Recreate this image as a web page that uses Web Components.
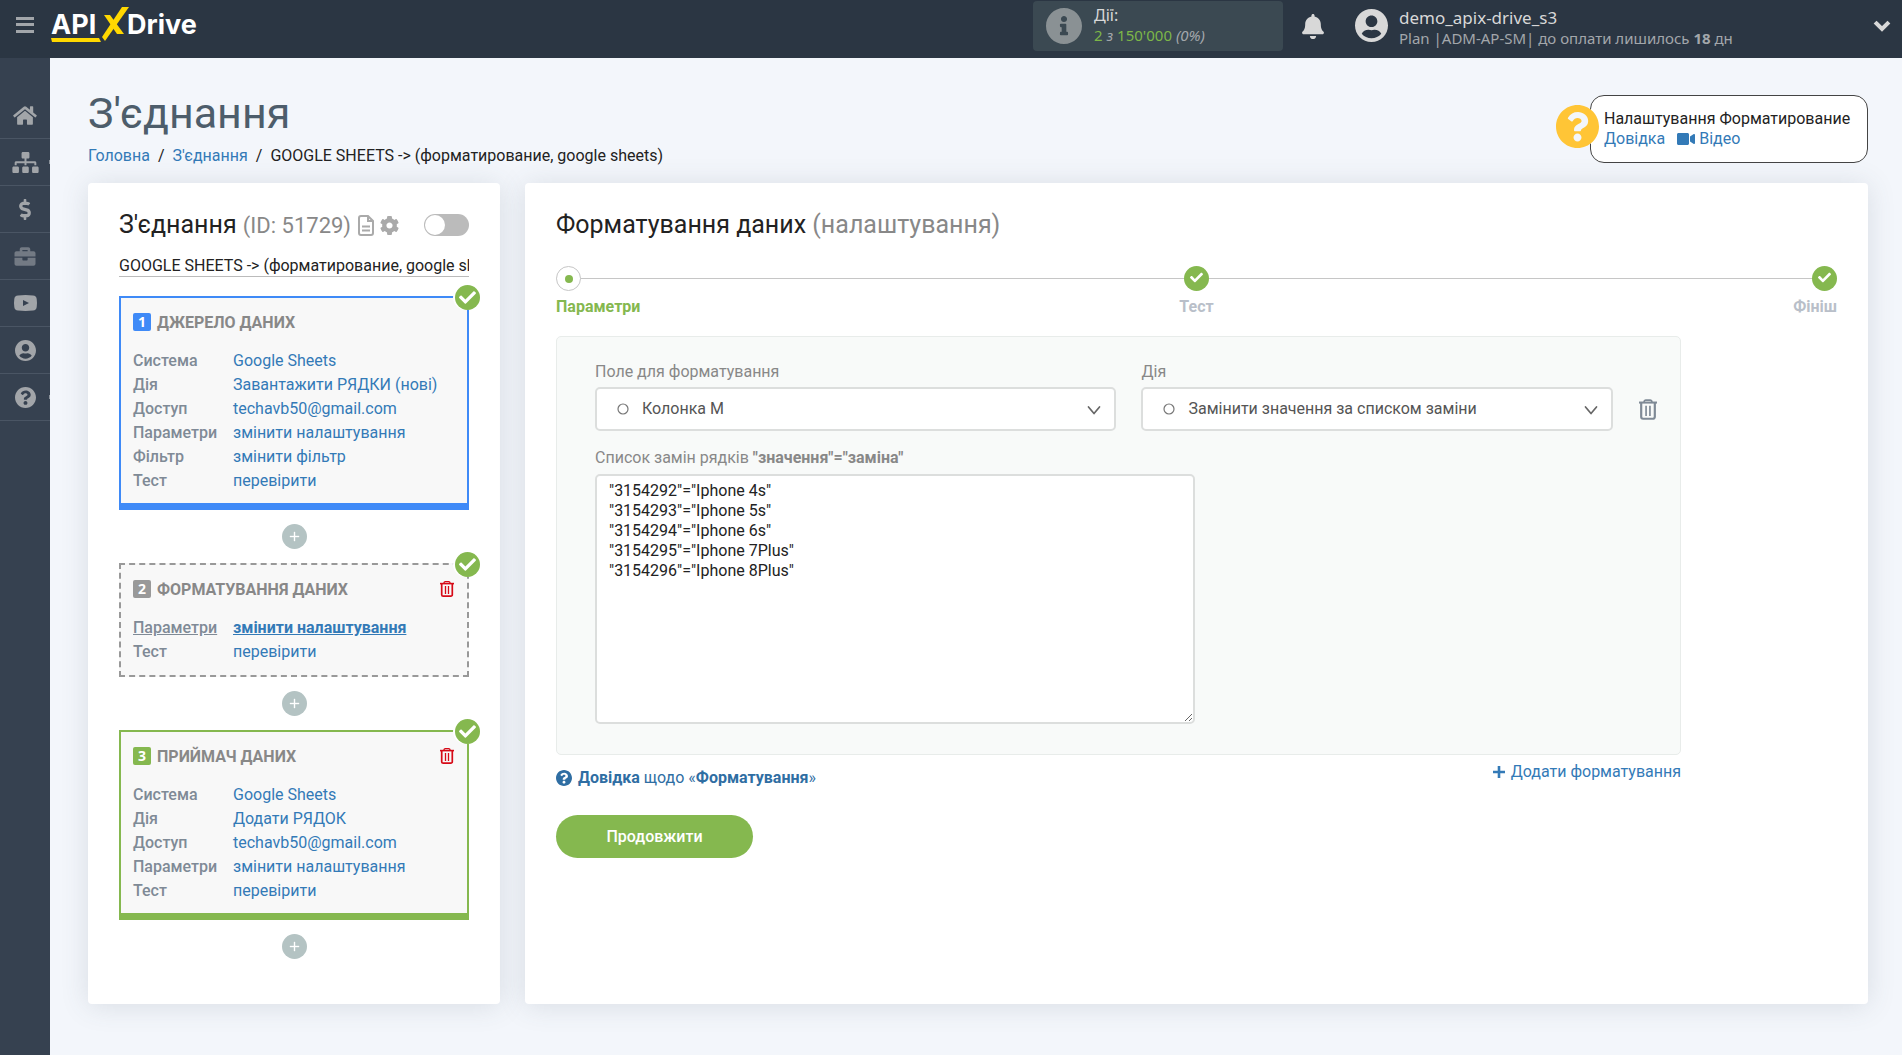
<!DOCTYPE html>
<html lang="uk">
<head>
<meta charset="utf-8">
<meta name="viewport" content="width=device-width, initial-scale=1">
<title>З'єднання | ApiX-Drive</title>
<style>
  :root {
    --green: #85b84f;
    --blue: #3f8af7;
    --grey: #999;
    --link: #337ab7;
    --muted: #888;
    --label: #7f8a96;
  }
  * { box-sizing: border-box; }
  body {
    margin: 0;
    min-height: 100vh;
    background: #f3f6fb;
    color: #222;
    font-family: Roboto, "Liberation Sans", sans-serif;
    font-size: 16px;
    line-height: 20px;
  }
  a { color: var(--link); text-decoration: none; }
</style>
</head>
<body>
<apix-app></apix-app>

<script>
// name -> [viewBox, markup]
const ICONS = {
  menu: ["0 0 18 16", '<path d="M0 0h18v3H0zM0 6h18v3H0zM0 13h18v3H0z"/>'],
  home: ["0 0 576 512", '<path d="M280.37 148.26L96 300.11V464a16 16 0 0 0 16 16l112.06-.29a16 16 0 0 0 15.92-16V368a16 16 0 0 1 16-16h64a16 16 0 0 1 16 16v95.64a16 16 0 0 0 16 16.05L464 480a16 16 0 0 0 16-16V300L295.67 148.26a12.19 12.19 0 0 0-15.3 0zM571.6 251.47L488 182.56V44.05a12 12 0 0 0-12-12h-56a12 12 0 0 0-12 12v72.61L318.47 43a48 48 0 0 0-61 0L4.34 251.47a12 12 0 0 0-1.6 16.9l25.5 31A12 12 0 0 0 45.15 301l235.22-193.74a12.19 12.19 0 0 1 15.3 0L530.9 301a12 12 0 0 0 16.9-1.6l25.5-31a12 12 0 0 0-1.7-16.93z"/>'],
  sitemap: ["0 0 640 512", '<path d="M128 352H32c-17.67 0-32 14.33-32 32v96c0 17.67 14.33 32 32 32h96c17.67 0 32-14.33 32-32v-96c0-17.67-14.33-32-32-32zm-24-80h192v48h48v-48h192v48h48v-57.59c0-21.17-17.23-38.41-38.41-38.41H344v-64h40c17.67 0 32-14.33 32-32V32c0-17.67-14.33-32-32-32H256c-17.67 0-32 14.33-32 32v96c0 17.67 14.33 32 32 32h40v64H94.41C73.23 224 56 241.23 56 262.41V320h48v-48zm264 80h-96c-17.67 0-32 14.33-32 32v96c0 17.67 14.33 32 32 32h96c17.67 0 32-14.33 32-32v-96c0-17.67-14.33-32-32-32zm240 0h-96c-17.67 0-32 14.33-32 32v96c0 17.67 14.33 32 32 32h96c17.67 0 32-14.33 32-32v-96c0-17.67-14.33-32-32-32z"/>'],
  dollar: ["0 0 288 512", '<path d="M209.200 233.400l-108-31.600C88.700 198.200 80 186.500 80 173.500c0-16.300 13.200-29.500 29.500-29.500h66.300c12.200 0 24.200 3.700 34.200 10.500 6.100 4.100 14.300 3.100 19.500-2l34.800-34c7.100-6.900 6.100-18.400-1.800-24.500C238 74.800 207.400 64.100 176 64V16c0-8.800-7.200-16-16-16h-32c-8.800 0-16 7.200-16 16v48h-2.500C45.800 64-5.400 118.700.5 183.600c4.200 46.100 39.400 83.600 83.800 96.600l102.500 30c12.500 3.700 21.200 15.300 21.200 28.300 0 16.300-13.200 29.500-29.500 29.500h-66.300C100 368 88 364.300 78 357.500c-6.100-4.100-14.300-3.100-19.500 2l-34.800 34c-7.100 6.900-6.100 18.400 1.800 24.500 24.500 19.200 55.100 29.900 86.500 30v48c0 8.800 7.200 16 16 16h32c8.800 0 16-7.200 16-16v-48.200c46.600-.9 90.300-28.600 105.700-72.700 21.500-61.600-14.600-124.800-72.500-141.700z"/>'],
  briefcase: ["0 0 512 512", '<path d="M320 336c0 8.840-7.160 16-16 16h-96c-8.840 0-16-7.160-16-16v-48H0v144c0 25.600 22.400 48 48 48h416c25.600 0 48-22.400 48-48V288H320v48zm144-208h-80V80c0-25.600-22.400-48-48-48H176c-25.600 0-48 22.400-48 48v48H48c-25.600 0-48 22.400-48 48v80h512v-80c0-25.600-22.400-48-48-48zm-144 0H192V96h128v32z"/>'],
  youtube: ["0 0 23 16", '<path fill-rule="evenodd" d="M4 .4Q11.500-.4 19 .4Q22.400.6 22.700 4Q23.300 8 22.700 12Q22.400 15.400 19 15.600Q11.500 16.400 4 15.600Q.6 15.400.3 12Q-.3 8 .3 4Q.6.6 4 .4zM9 5v6l6-3z"/>'],
  user: ["0 8 496 496", '<path d="M248 8C111 8 0 119 0 256s111 248 248 248 248-111 248-248S385 8 248 8zm0 96c48.600 0 88 39.400 88 88s-39.400 88-88 88-88-39.400-88-88 39.400-88 88-88zm0 344c-58.700 0-111.300-26.600-146.500-68.200 18.800-35.400 55.600-59.800 98.500-59.800 2.400 0 4.800.4 7.100 1.100 13 4.200 26.600 6.900 40.900 6.900 14.300 0 28-2.700 40.900-6.900 2.300-.7 4.700-1.100 7.100-1.100 42.900 0 79.700 24.400 98.500 59.800C359.300 421.400 306.700 448 248 448z"/>'],
  question: ["8 8 496 496", '<path d="M504 256c0 136.997-111.043 248-248 248S8 392.997 8 256C8 119.083 119.043 8 256 8s248 111.083 248 248zM262.655 90c-54.497 0-89.255 22.957-116.549 63.758-3.536 5.286-2.353 12.415 2.715 16.258l34.699 26.310c5.205 3.947 12.621 3.008 16.665-2.122 17.864-22.658 30.113-35.797 57.303-35.797 20.429 0 45.698 13.148 45.698 32.958 0 14.976-12.363 22.667-32.534 33.976C247.128 238.528 216 254.941 216 296v4c0 6.627 5.373 12 12 12h56c6.627 0 12-5.373 12-12v-1.333c0-28.462 83.186-29.647 83.186-106.667 0-58.002-60.165-102-116.531-102zM256 338c-25.365 0-46 20.635-46 46 0 25.364 20.635 46 46 46s46-20.636 46-46c0-25.365-20.635-46-46-46z"/>'],
  info: ["8 8 496 496", '<path d="M256 8C119.043 8 8 119.083 8 256c0 136.997 111.043 248 248 248s248-111.003 248-248C504 119.083 392.957 8 256 8zm0 110c23.196 0 42 18.804 42 42s-18.804 42-42 42-42-18.804-42-42 18.804-42 42-42zm56 254c0 6.627-5.373 12-12 12h-88c-6.627 0-12-5.373-12-12v-24c0-6.627 5.373-12 12-12h12v-64h-12c-6.627 0-12-5.373-12-12v-24c0-6.627 5.373-12 12-12h64c6.627 0 12 5.373 12 12v100h12c6.627 0 12 5.373 12 12v24z"/>'],
  bell: ["0 0 448 512", '<path d="M224 512c35.320 0 63.970-28.650 63.970-64H160.030c0 35.350 28.650 64 63.970 64zm215.390-149.710c-19.320-20.760-55.470-51.990-55.470-154.290 0-77.700-54.480-139.900-127.940-155.160V32c0-17.670-14.320-32-31.980-32s-31.980 14.330-31.980 32v20.840C118.560 68.100 64.080 130.300 64.080 208c0 102.300-36.150 133.530-55.470 154.290-6 6.450-8.660 14.160-8.610 21.710.11 16.400 12.980 32 32.100 32h383.800c19.120 0 32-15.600 32.100-32 .05-7.550-2.610-15.270-8.610-21.710z"/>'],
  cog: ["16 8 480 496", '<path d="M487.400 315.700l-42.600-24.600c4.300-23.200 4.300-47 0-70.200l42.600-24.600c4.900-2.800 7.100-8.600 5.500-14-11.100-35.600-30-67.800-54.700-94.600-3.800-4.100-10-5.100-14.800-2.300L380.800 110c-17.900-15.400-38.500-27.300-60.800-35.100V25.800c0-5.600-3.900-10.500-9.400-11.700-36.700-8.200-74.300-7.800-109.200 0-5.500 1.200-9.400 6.100-9.400 11.700V75c-22.200 7.900-42.800 19.800-60.800 35.100L88.700 85.500c-4.900-2.800-11-1.900-14.800 2.300-24.700 26.700-43.600 58.900-54.700 94.600-1.700 5.400.6 11.200 5.500 14L67.300 221c-4.300 23.200-4.300 47 0 70.200l-42.600 24.600c-4.900 2.800-7.100 8.600-5.500 14 11.100 35.600 30 67.800 54.700 94.600 3.800 4.100 10 5.100 14.800 2.300l42.600-24.600c17.900 15.400 38.500 27.300 60.800 35.100v49.200c0 5.600 3.900 10.500 9.400 11.700 36.700 8.200 74.300 7.800 109.200 0 5.500-1.200 9.400-6.100 9.400-11.700v-49.200c22.200-7.900 42.800-19.800 60.800-35.100l42.600 24.600c4.900 2.800 11 1.900 14.800-2.300 24.700-26.700 43.600-58.900 54.700-94.600 1.500-5.500-.7-11.300-5.600-14.100zM256 336c-44.100 0-80-35.900-80-80s35.900-80 80-80 80 35.900 80 80-35.900 80-80 80z"/>'],
  file: ["0 0 16 21", '<g fill="none" stroke="currentColor" stroke-width="2"><path d="M3 1h7l5 5v12a2 2 0 0 1-2 2H3a2 2 0 0 1-2-2V3a2 2 0 0 1 2-2z"/><path d="M10 1v5h5M4 11.500h8M4 15.500h8"/></g>'],
  check: ["0 0 512 512", '<path d="M173.898 439.404l-166.400-166.400c-9.997-9.997-9.997-26.206 0-36.204l36.203-36.204c9.997-9.998 26.207-9.998 36.204 0L192 312.690 432.095 72.596c9.997-9.997 26.207-9.997 36.204 0l36.203 36.204c9.997 9.997 9.997 26.206 0 36.204l-294.400 294.401c-9.998 9.997-26.207 9.997-36.204-.001z"/>'],
  video: ["0 64 576 384", '<path d="M336.200 64H47.800C21.400 64 0 85.400 0 111.800v288.400C0 426.600 21.400 448 47.800 448h288.400c26.400 0 47.800-21.400 47.800-47.800V111.800c0-26.400-21.400-47.800-47.800-47.800zm189.400 37.700L416 177.300v157.400l109.600 75.500c21.200 14.600 50.400-.3 50.400-25.800V127.500c0-25.400-29.100-40.400-50.400-25.800z"/>'],
  plus: ["0 0 12 12", '<path d="M4.700 0h2.600v4.700H12v2.600H7.300V12H4.700V7.300H0V4.700h4.700z"/>'],
  thinplus: ["0 0 9 9", '<path d="M4 0h1v4h4v1H5v4H4V5H0V4h4z" stroke="currentColor" stroke-width=".4"/>'],
  chevron: ["0 0 16 11", '<path d="M2.500 2.500L8 8l5.500-5.500" fill="none" stroke="currentColor" stroke-width="4" stroke-linecap="square"/>'],
  caret: ["0 0 14 10", '<path d="M1.500 1.500L7 8l5.500-6.500" fill="none" stroke="currentColor" stroke-width="1.700" stroke-linecap="round" stroke-linejoin="round"/>'],
  ring: ["0 0 12 12", '<circle cx="6" cy="6" r="5" fill="none" stroke="currentColor" stroke-width="1.200"/>'],
  trash: ["0 0 14 16", '<g fill="none" stroke="currentColor"><path d="M0 2.600h14" stroke-width="1.600"/><path d="M4 2.500V2a1.300 1.300 0 0 1 1.300-1.300h3.400A1.300 1.300 0 0 1 10 2v.5" stroke-width="1.300"/><path d="M1.700 3v10.700a1.500 1.500 0 0 0 1.500 1.500h7.600a1.500 1.500 0 0 0 1.500-1.500V3" stroke-width="1.700"/><path d="M5.500 5v8M8.500 5v8" stroke-width="1.300"/></g>'],
};

// Shared by every shadow root
const BASE = `
  *, *::before, *::after { box-sizing: border-box; }
  a { color: var(--link); text-decoration: none; }
  button { margin: 0; padding: 0; border: 0; background: none; font: inherit; color: inherit; cursor: pointer; }
`;

class ApixElement extends HTMLElement {
  constructor() {
    super();
    this.attachShadow({ mode: "open" });
  }

  connectedCallback() {
    this.shadowRoot.innerHTML = `<style>${BASE}${this.styles()}</style>${this.render()}`;
  }

  styles() { return ":host { display: block; }"; }
  render() { return "<slot></slot>"; }
}

/** <apix-icon name="bell">, sized by width/height on the host. */
class ApixIcon extends ApixElement {
  styles() {
    return `
      :host { display: inline-block; flex: none; }
      svg { display: block; width: 100%; height: 100%; fill: currentColor; overflow: visible; }
    `;
  }
  render() {
    const [box, markup] = ICONS[this.getAttribute("name")];
    return `<svg viewBox="${box}" aria-hidden="true">${markup}</svg>`;
  }
}

class ApixLogo extends ApixElement {
  styles() {
    return `
      :host { display: block; flex: none; width: 154px; height: 38px; }
      svg { display: block; }
      text { font: 700 27px Inter, "Open Sans", sans-serif; fill: #fff; }
    `;
  }
  render() {
    return `
      <svg width="154" height="38" viewBox="0 0 154 38" role="img" aria-label="APIXDrive">
        <text x="1" y="28">API</text>
        <text x="77" y="28">Drive</text>
        <g fill="#ffd800">
          <path d="M72 1h7L55 35l-3-4z"/>
          <path d="M54 9h6l14 19h-7z"/>
          <path d="M1 32h48l2 4H2z"/>
        </g>
      </svg>`;
  }
}

class ApixHeader extends ApixElement {
  styles() {
    return `
      :host {
        display: flex; align-items: flex-start; height: 58px; padding: 0 12px 0 16px;
        background: #2b3643; color: #d8d8d8;
        font-family: "Noto Sans", "Open Sans", sans-serif;
      }
      .menu { margin-top: 17px; color: #a2a6aa; }
      .menu apix-icon { display: block; width: 18px; height: 16px; }
      .home { margin: 6px auto 0 16px; }
      .actions {
        display: flex; align-items: center; gap: 12px; width: 250px; height: 50px;
        margin-top: 1px; padding: 0 13px; border-radius: 4px; background: #3b4952;
      }
      .actions apix-icon { width: 36px; height: 36px; color: #8a9194; }
      .actions div { line-height: 20px; }
      .actions > div { padding-bottom: 2px; }
      .small { font-size: 15px; color: #a3a7ab; }
      .green { color: #7db648; }
      .bell { margin: 14px 31px 0 19px; }
      .bell apix-icon { display: block; width: 22px; height: 25px; }
      .account { display: flex; gap: 11px; flex: 0 1 519px; padding-top: 8px; }
      .account apix-icon { width: 33px; height: 33px; margin-top: 1px; }
      .name { font-size: 17px; line-height: 20px; }
      .more { margin-top: 21px; }
      .more apix-icon { display: block; width: 16px; height: 11px; }
    `;
  }
  render() {
    return `
      <button class="menu" aria-label="Меню"><apix-icon name="menu"></apix-icon></button>
      <a class="home" href="#"><apix-logo></apix-logo></a>
      <div class="actions">
        <apix-icon name="info"></apix-icon>
        <div>
          <div>Дії:</div>
          <div class="small"><span class="green">2</span> <i>з</i> <span class="green">150'000</span> <i>(0%)</i></div>
        </div>
      </div>
      <button class="bell" aria-label="Сповіщення"><apix-icon name="bell"></apix-icon></button>
      <div class="account">
        <apix-icon name="user"></apix-icon>
        <div>
          <div class="name">demo_apix-drive_s3</div>
          <div class="small">Plan |ADM-AP-SM| до оплати лишилось <b>18</b> дн</div>
        </div>
      </div>
      <button class="more" aria-label="Ще"><apix-icon name="chevron"></apix-icon></button>
    `;
  }
}

class ApixSidebar extends ApixElement {
  styles() {
    return `
      :host { display: block; flex: none; width: 50px; padding-top: 34px; background: #364150; }
      a {
        position: relative; display: flex; align-items: center; justify-content: center;
        height: 47px; border-bottom: 1px solid #4a5564; color: #a2a5a9;
      }
      a.dim { color: #737a84; }
      a.sub::after { content: ""; position: absolute; right: 0; width: 1px; height: 4px; background: #8a919a; }
    `;
  }
  render() {
    const items = [
      ["home", 24, 21, "Головна", ""],
      ["sitemap", 27, 21, "З'єднання", "sub"],
      ["dollar", 12, 21, "Оплата", ""],
      ["briefcase", 22, 21, "Портфель", "dim"],
      ["youtube", 23, 16, "Відео", ""],
      ["user", 21, 21, "Профіль", ""],
      ["question", 21, 21, "Довідка", "sub"],
    ];
    return `<nav>${items.map(([icon, w, h, label, cls]) => `
      <a href="#" class="${cls}" aria-label="${label}"><apix-icon name="${icon}" style="width:${w}px;height:${h}px"></apix-icon></a>`).join("")}</nav>`;
  }
}

class HelpBox extends ApixElement {
  styles() {
    return `
      :host {
        display: block; position: relative; flex: none; min-width: 278px; margin-top: 7px; padding: 13px;
        border: 1px solid #444; border-radius: 14px; background: #fff;
      }
      .mark { position: absolute; left: -35px; top: 9px; width: 43px; height: 43px; border-radius: 50%; background: #f3f6fb; color: #ffc536; }
      nav { display: flex; gap: 12px; }
      nav a { display: flex; align-items: center; gap: 4px; }
      nav apix-icon { width: 18px; height: 12px; }
    `;
  }
  render() {
    return `
      <apix-icon class="mark" name="question"></apix-icon>
      <slot></slot>
      <nav>
        <a href="#">Довідка</a>
        <a href="#"><apix-icon name="video"></apix-icon>Відео</a>
      </nav>
    `;
  }
}

class ApixCard extends ApixElement {
  styles() {
    return `
      :host {
        display: block; min-width: 0; padding: 31px; border-radius: 4px; background: #fff;
        box-shadow: 0 2px 28px rgba(70, 80, 95, 0.15);
      }
      header { display: flex; align-items: center; height: 22px; }
      h2 { margin: 0; font-size: 25px; font-weight: 400; line-height: 22px; white-space: nowrap; }
      h2 span { color: var(--muted); }
      :host([compact]) h2 span { font-size: 22px; }
      slot[name="tools"] { display: contents; }
    `;
  }
  render() {
    return `
      <header>
        <h2>${this.getAttribute("heading")} <span>${this.getAttribute("note")}</span></h2>
        <slot name="tools"></slot>
      </header>
      <slot></slot>
    `;
  }
}

class ToggleSwitch extends ApixElement {
  styles() {
    return `
      :host { display: block; }
      input {
        appearance: none; display: flex; align-items: center; width: 45px; height: 22px; margin: 0;
        padding: 1px; border-radius: 11px; background: #bbb; cursor: pointer;
      }
      input::before { content: ""; width: 20px; height: 20px; border-radius: 50%; background: #fff; }
      input:checked { justify-content: flex-end; background: var(--green); }
    `;
  }
  render() { return `<input type="checkbox" aria-label="${this.getAttribute("label")}">`; }
}

/** One block of the connection: numbered heading and a list of <flow-row>. */
class FlowStep extends ApixElement {
  styles() {
    return `
      :host {
        display: block; position: relative; padding: 15px 13px 10px 12px;
        border: 2px solid var(--tone); border-bottom-width: 7px; background: #f8f8f8;
      }
      :host([draft]) { border-style: dashed; border-bottom-width: 2px; padding-bottom: 11px; }
      .done {
        position: absolute; right: -13px; top: -13px; display: flex; align-items: center; justify-content: center;
        width: 25px; height: 25px; border-radius: 50%; background: var(--green); color: #fff;
        box-shadow: -2px 0 0 #fff;
      }
      .done apix-icon { width: 17px; height: 17px; }
      header { display: flex; align-items: center; height: 18px; margin-bottom: 18px; }
      .num {
        width: 18px; height: 18px; margin-right: 6px; border-radius: 2px; background: var(--tone);
        color: #fff; font: 700 14px/18px "Open Sans", sans-serif; text-align: center;
      }
      h3 { margin: 0 auto 0 0; padding-top: 2px; font-size: 16px; font-weight: 700; color: var(--muted); text-transform: uppercase; }
      button { color: #d60a17; }
      button apix-icon { display: block; width: 14px; height: 16px; }
    `;
  }
  render() {
    const bin = this.hasAttribute("removable")
      ? '<button aria-label="Видалити"><apix-icon name="trash"></apix-icon></button>' : "";
    return `
      <span class="done"><apix-icon name="check"></apix-icon></span>
      <header>
        <span class="num">${this.getAttribute("number")}</span>
        <h3>${this.getAttribute("heading")}</h3>
        ${bin}
      </header>
      <slot></slot>
    `;
  }
}

class FlowRow extends ApixElement {
  styles() {
    return `
      :host { display: flex; line-height: 24px; white-space: nowrap; }
      .label { flex: 0 0 100px; font-weight: 500; color: var(--label); }
      :host([current]) .label span { text-decoration: underline; }
      :host([current]) a { font-weight: 700; text-decoration: underline; }
    `;
  }
  render() {
    return `<span class="label"><span>${this.getAttribute("label")}</span></span><a href="#"><slot></slot></a>`;
  }
}

class AddStep extends ApixElement {
  styles() {
    return `
      :host { display: flex; justify-content: center; margin: 14px 0; }
      button {
        display: flex; align-items: center; justify-content: center;
        width: 25px; height: 25px; border-radius: 50%; background: #b4c3c3; color: #fff;
      }
      apix-icon { width: 9px; height: 9px; }
    `;
  }
  render() { return '<button aria-label="Додати блок"><apix-icon name="thinplus"></apix-icon></button>'; }
}

class StepProgress extends ApixElement {
  styles() {
    return `
      :host { display: block; margin: 30px 0 19px; }
      ol {
        display: grid; grid-template-columns: 1fr 1fr 1fr; margin: 0; padding: 0; list-style: none;
        background: linear-gradient(#c6c6c6, #c6c6c6) 0 12px / 100% 1px no-repeat;
      }
      li { display: flex; flex-direction: column; align-items: center; gap: 6px; font-weight: 700; color: #b9bfc9; }
      li:first-child { align-items: flex-start; color: var(--green); }
      li:last-child { align-items: flex-end; }
      i {
        display: flex; align-items: center; justify-content: center;
        width: 25px; height: 25px; border-radius: 50%; background: var(--green); color: #fff;
      }
      li:first-child i { border: 1px solid #c6c6c6; background: #fff; }
      li:first-child i::before { content: ""; width: 8px; height: 8px; border-radius: 50%; background: var(--green); }
      i apix-icon { width: 13px; height: 13px; margin-bottom: 2px; }
    `;
  }
  render() {
    return `
      <ol>
        <li><i></i>Параметри</li>
        <li><i><apix-icon name="check"></apix-icon></i>Тест</li>
        <li><i><apix-icon name="check"></apix-icon></i>Фініш</li>
      </ol>
    `;
  }
}

class SelectField extends ApixElement {
  styles() {
    return `
      :host { display: block; min-width: 0; }
      label { display: block; margin-bottom: 5px; color: var(--muted); }
      .box { position: relative; }
      select {
        appearance: none; display: block; width: 100%; height: 44px; padding: 0 45px;
        border: 2px solid #dcdedd; border-radius: 5px; background: #fff; color: #555; font: inherit;
      }
      apix-icon { position: absolute; pointer-events: none; }
      .ring { left: 22px; top: 16px; width: 12px; height: 12px; color: #777; }
      .caret { right: 15px; top: 18px; width: 14px; height: 11px; color: #666; }
    `;
  }
  render() {
    return `
      <label for="field">${this.getAttribute("label")}</label>
      <div class="box">
        <select id="field"><option>${this.getAttribute("value")}</option></select>
        <apix-icon class="ring" name="ring"></apix-icon>
        <apix-icon class="caret" name="caret"></apix-icon>
      </div>
    `;
  }
}

/** Form of the "parameters" stage. */
class FormatForm extends ApixElement {
  styles() {
    return `
      :host { display: block; max-width: 1125px; }
      .panel { padding: 25px 22px 30px 38px; border: 1px solid #e8ecea; border-radius: 5px; background: #f8faf9; }
      .fields { display: grid; grid-template-columns: 522fr 472fr 20px; gap: 25px; align-items: end; margin-bottom: 17px; }
      .bin { display: flex; align-items: center; justify-content: center; height: 44px; color: var(--label); }
      .bin apix-icon { width: 18px; height: 21px; }
      .panel > label { display: block; margin-bottom: 6px; color: var(--muted); }
      textarea {
        display: block; width: 600px; max-width: 100%; height: 250px; padding: 5px 12px;
        border: 2px solid #dcdedd; border-radius: 5px; background: #fff; color: #222; font: inherit; resize: both;
      }
      .links { display: flex; justify-content: space-between; align-items: flex-start; margin-top: 7px; }
      .links a { display: flex; align-items: center; gap: 6px; }
      .links .help { margin-top: 6px; color: #2f6ea3; }
      .help apix-icon { width: 16px; height: 16px; }
      .add apix-icon { width: 12px; height: 12px; }
      .go {
        display: block; margin-top: 27px; width: 197px; height: 43px; border-radius: 22px;
        background: var(--green); color: #fff; font-weight: 500;
      }
    `;
  }
  render() {
    return `
      <form>
        <div class="panel">
          <div class="fields">
            <select-field label="Поле для форматування" value="Колонка M"></select-field>
            <select-field label="Дія" value="Замінити значення за списком заміни"></select-field>
            <button type="button" class="bin" aria-label="Видалити"><apix-icon name="trash"></apix-icon></button>
          </div>
          <label for="pairs">Список замін рядків <b>"значення"="заміна"</b></label>
          <textarea id="pairs" spellcheck="false">"3154292"="Iphone 4s"
"3154293"="Iphone 5s"
"3154294"="Iphone 6s"
"3154295"="Iphone 7Plus"
"3154296"="Iphone 8Plus"</textarea>
        </div>
        <div class="links">
          <a class="help" href="#"><apix-icon name="question"></apix-icon><span><b>Довідка</b> щодо «<b>Форматування</b>»</span></a>
          <a class="add" href="#"><apix-icon name="plus"></apix-icon>Додати форматування</a>
        </div>
        <button type="button" class="go">Продовжити</button>
      </form>
    `;
  }
}

class ApixApp extends ApixElement {
  styles() {
    return `
      :host { display: flex; flex-direction: column; min-height: 100vh; }
      .body { display: flex; flex: 1; }
      main { flex: 1; min-width: 0; padding: 30px 34px 50px 38px; }
      .head { display: flex; justify-content: space-between; align-items: flex-start; margin-bottom: 17px; }
      h1 { margin: 0 0 8px; font-size: 43px; font-weight: 400; line-height: 50px; color: #4d5d6b; }
      .crumbs { display: flex; gap: 8px; }
      .cards { display: grid; grid-template-columns: 412px 1fr; gap: 25px; }
      .tools { display: flex; align-items: center; gap: 6px; flex: 1; margin-left: 7px; color: #aaa; }
      .tools button apix-icon { display: block; }
      .tools toggle-switch { margin-left: auto; }
      .title {
        display: block; width: 100%; height: 24px; margin: 17px 0 19px; padding: 2px 0 0; border: 0;
        border-bottom: 1px solid #bbb; background: none; color: #222; font: inherit;
      }
    `;
  }
  render() {
    return `
      <apix-header></apix-header>
      <div class="body">
        <apix-sidebar></apix-sidebar>
        <main>
          <div class="head">
            <div>
              <h1>З'єднання</h1>
              <nav class="crumbs">
                <a href="#">Головна</a><span>/</span><a href="#">З'єднання</a><span>/</span>
                <span>GOOGLE SHEETS -&gt; (форматирование, google sheets)</span>
              </nav>
            </div>
            <help-box>Налаштування Форматирование</help-box>
          </div>
          <div class="cards">
            <apix-card heading="З'єднання" note="(ID: 51729)" compact>
              <div slot="tools" class="tools">
                <button aria-label="Лог"><apix-icon name="file" style="width:16px;height:21px"></apix-icon></button>
                <button aria-label="Налаштування"><apix-icon name="cog" style="width:19px;height:19px"></apix-icon></button>
                <toggle-switch label="Увімкнути"></toggle-switch>
              </div>
              <input class="title" type="text" aria-label="Назва" value="GOOGLE SHEETS -&gt; (форматирование, google sheets)">
              <flow-step number="1" heading="Джерело даних" style="--tone: var(--blue)">
                <flow-row label="Система">Google Sheets</flow-row>
                <flow-row label="Дія">Завантажити РЯДКИ (нові)</flow-row>
                <flow-row label="Доступ">techavb50@gmail.com</flow-row>
                <flow-row label="Параметри">змінити налаштування</flow-row>
                <flow-row label="Фільтр">змінити фільтр</flow-row>
                <flow-row label="Тест">перевірити</flow-row>
              </flow-step>
              <add-step></add-step>
              <flow-step number="2" heading="Форматування даних" draft removable style="--tone: var(--grey)">
                <flow-row label="Параметри" current>змінити налаштування</flow-row>
                <flow-row label="Тест">перевірити</flow-row>
              </flow-step>
              <add-step></add-step>
              <flow-step number="3" heading="Приймач даних" removable style="--tone: var(--green)">
                <flow-row label="Система">Google Sheets</flow-row>
                <flow-row label="Дія">Додати РЯДОК</flow-row>
                <flow-row label="Доступ">techavb50@gmail.com</flow-row>
                <flow-row label="Параметри">змінити налаштування</flow-row>
                <flow-row label="Тест">перевірити</flow-row>
              </flow-step>
              <add-step></add-step>
            </apix-card>
            <apix-card heading="Форматування даних" note="(налаштування)">
              <step-progress></step-progress>
              <format-form></format-form>
            </apix-card>
          </div>
        </main>
      </div>
    `;
  }
}

const elements = {
  "apix-icon": ApixIcon,
  "apix-logo": ApixLogo,
  "apix-header": ApixHeader,
  "apix-sidebar": ApixSidebar,
  "help-box": HelpBox,
  "apix-card": ApixCard,
  "toggle-switch": ToggleSwitch,
  "flow-step": FlowStep,
  "flow-row": FlowRow,
  "add-step": AddStep,
  "step-progress": StepProgress,
  "select-field": SelectField,
  "format-form": FormatForm,
  "apix-app": ApixApp,
};

for (const [name, cls] of Object.entries(elements)) {
  if (!customElements.get(name)) {
    customElements.define(name, cls);
  }
}
</script>
</body>
</html>
